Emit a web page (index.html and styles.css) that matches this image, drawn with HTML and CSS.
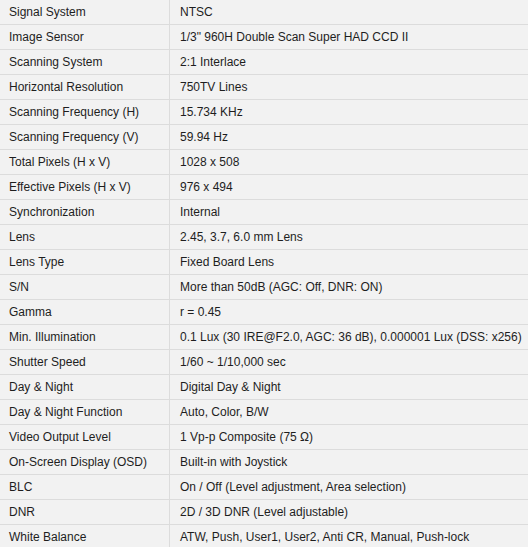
FILE: index.html
```html
<!DOCTYPE html>
<html>
<head>
<meta charset="utf-8">
<link rel="stylesheet" href="styles.css">
</head>
<body>
<table class="spec">
<tr><td class="k">Signal System</td><td class="v">NTSC</td></tr>
<tr><td class="k">Image Sensor</td><td class="v">1/3" 960H Double Scan Super HAD CCD II</td></tr>
<tr><td class="k">Scanning System</td><td class="v">2:1 Interlace</td></tr>
<tr><td class="k">Horizontal Resolution</td><td class="v">750TV Lines</td></tr>
<tr><td class="k">Scanning Frequency (H)</td><td class="v">15.734 KHz</td></tr>
<tr><td class="k">Scanning Frequency (V)</td><td class="v">59.94 Hz</td></tr>
<tr><td class="k">Total Pixels (H x V)</td><td class="v">1028 x 508</td></tr>
<tr><td class="k">Effective Pixels (H x V)</td><td class="v">976 x 494</td></tr>
<tr><td class="k">Synchronization</td><td class="v">Internal</td></tr>
<tr><td class="k">Lens</td><td class="v">2.45, 3.7, 6.0 mm Lens</td></tr>
<tr><td class="k">Lens Type</td><td class="v">Fixed Board Lens</td></tr>
<tr><td class="k">S/N</td><td class="v">More than 50dB (AGC: Off, DNR: ON)</td></tr>
<tr><td class="k">Gamma</td><td class="v">r = 0.45</td></tr>
<tr><td class="k">Min. Illumination</td><td class="v">0.1 Lux (30 IRE@F2.0, AGC: 36 dB), 0.000001 Lux (DSS: x256)</td></tr>
<tr><td class="k">Shutter Speed</td><td class="v">1/60 ~ 1/10,000 sec</td></tr>
<tr><td class="k">Day &amp; Night</td><td class="v">Digital Day &amp; Night</td></tr>
<tr><td class="k">Day &amp; Night Function</td><td class="v">Auto, Color, B/W</td></tr>
<tr><td class="k">Video Output Level</td><td class="v">1 Vp-p Composite (75 Ω)</td></tr>
<tr><td class="k">On-Screen Display (OSD)</td><td class="v">Built-in with Joystick</td></tr>
<tr><td class="k">BLC</td><td class="v">On / Off (Level adjustment, Area selection)</td></tr>
<tr><td class="k">DNR</td><td class="v">2D / 3D DNR (Level adjustable)</td></tr>
<tr><td class="k">White Balance</td><td class="v">ATW, Push, User1, User2, Anti CR, Manual, Push-lock</td></tr>
</table>
</body>
</html>
```
FILE: styles.css
```css
html, body {
  margin: 0;
  padding: 0;
  background: #f2f2f2;
}
.spec {
  width: 528px;
  border-collapse: collapse;
  font-family: "Liberation Sans", Arial, sans-serif;
  font-size: 12px;
  color: #1e1e1e;
}
.spec td {
  height: 24px;
  padding: 0;
  border-bottom: 1px solid #dcdcdc;
  vertical-align: middle;
  white-space: nowrap;
}
.spec .k {
  width: 160px;
  padding-left: 9px;
  border-right: 1px solid #dcdcdc;
}
.spec .v {
  padding-left: 10px;
}
```
